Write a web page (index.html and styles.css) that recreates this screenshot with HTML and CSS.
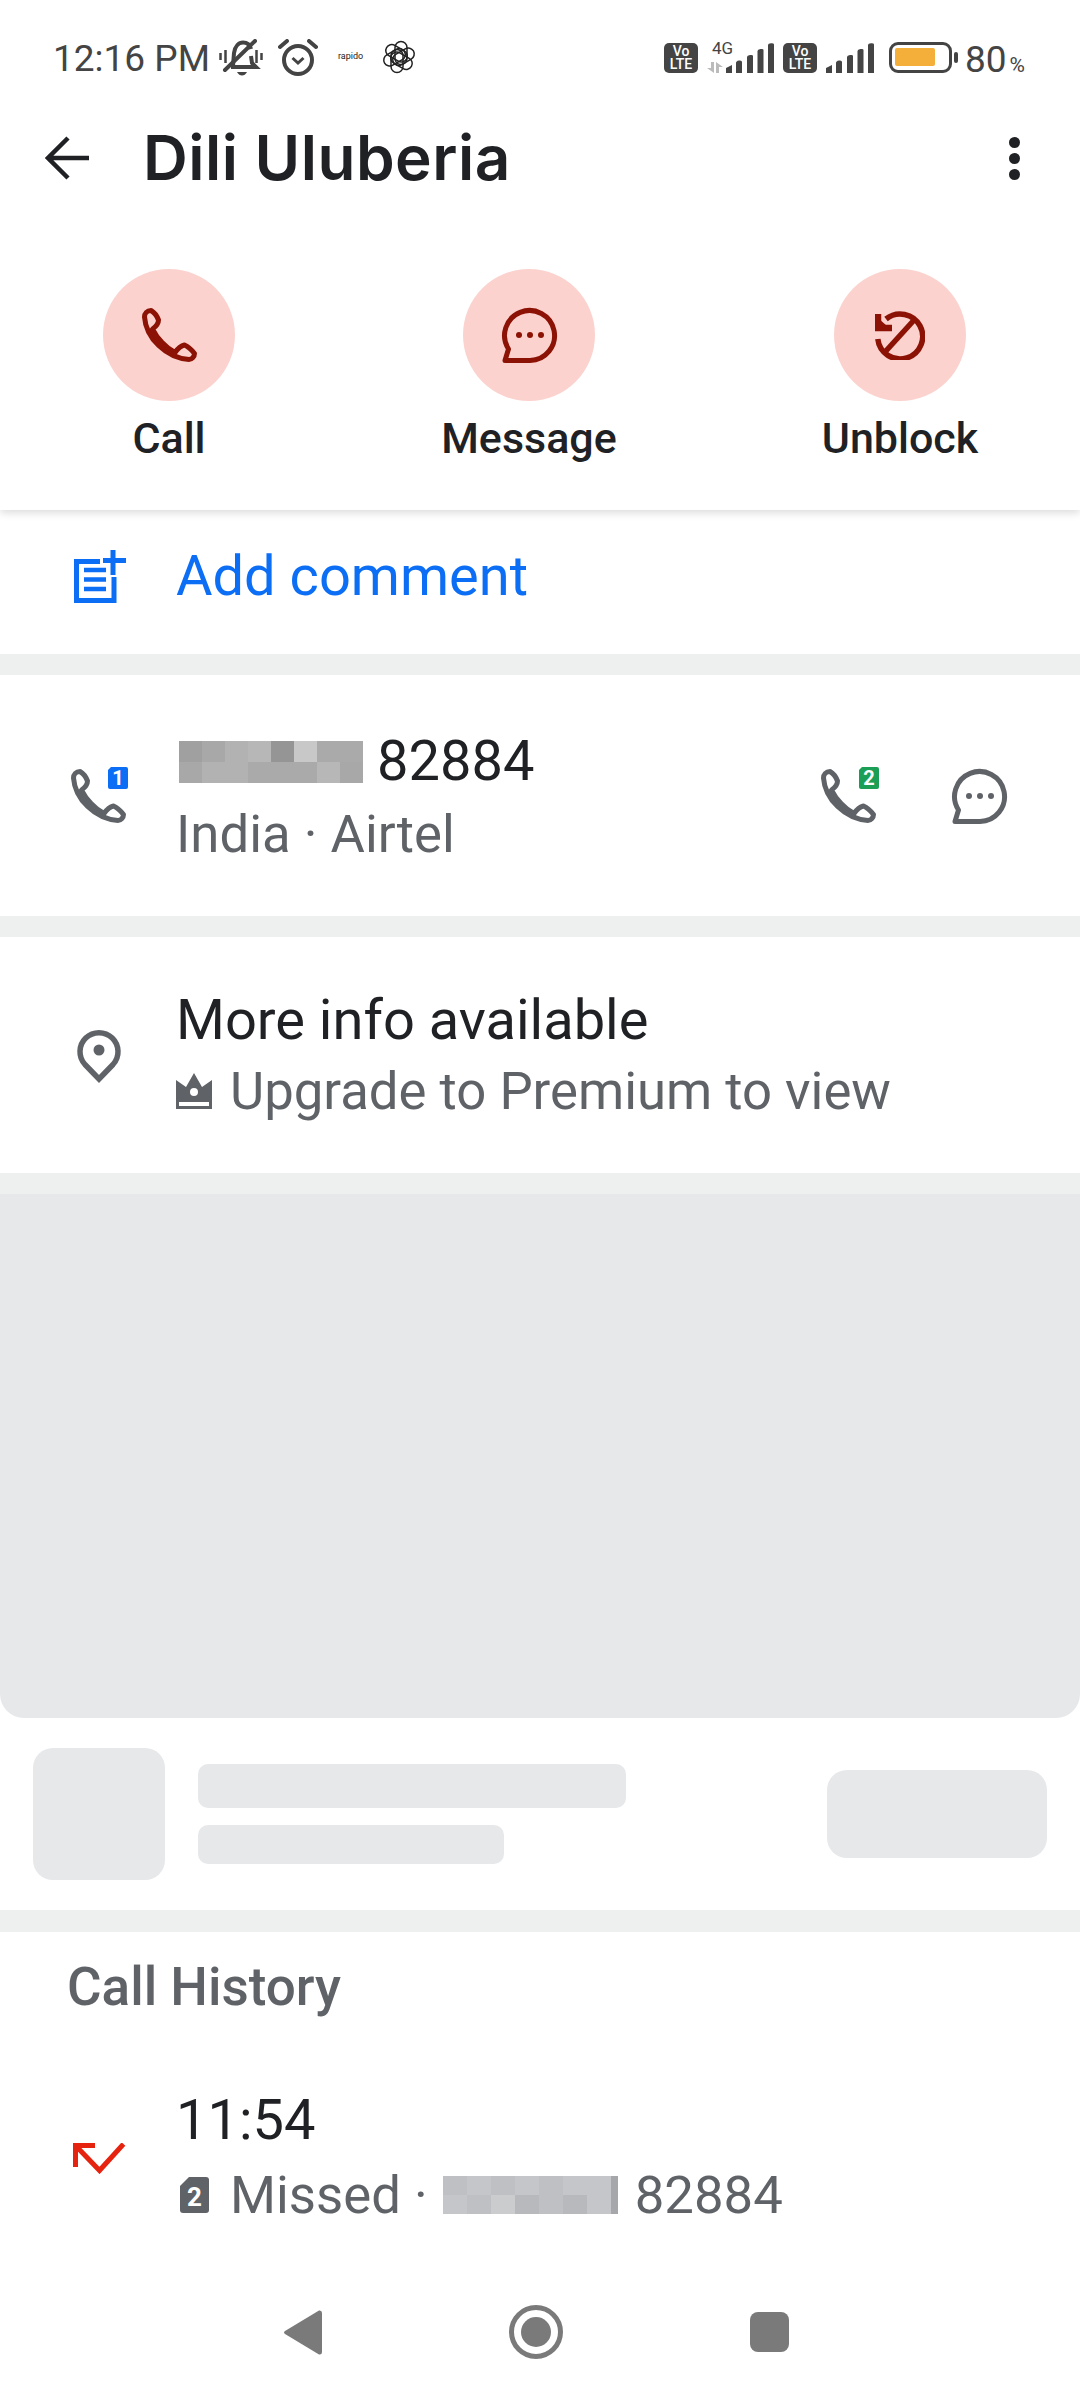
FILE: index.html
```html
<!DOCTYPE html>
<html lang="en">
<head>
  <meta charset="UTF-8" />
  <meta name="viewport" content="width=device-width, initial-scale=1.0"/>
  <title>Dili Uluberia</title>
  <link rel="stylesheet" href="styles.css">
</head>

<body>
  <!-- shared icons -->
  <svg class="sprite" width="0" height="0">
    <symbol id="phone" viewBox="0 0 55 54">
      <path d="M9 2.5C5 2.5 2.5 5.500 2.500 9C4 30 24 50 47 51.500C50 51.500 52.500 48.500 52.500 45.500C49 41 46 38.500 42.500 37C38 38 35.500 41 33 44.500C24 40 15 30 10.500 21C14 18.500 16.500 15 16.500 12C15 8 12.500 4.500 9 2.500Z" fill="none" stroke="currentColor" stroke-width="5" stroke-linejoin="round"/>
    </symbol>
    <symbol id="bubble" viewBox="0 0 57 56">
      <path d="M4 53.500L7.500 42A25 25 0 1 1 29 53.500Z" fill="none" stroke="currentColor" stroke-width="5" stroke-linejoin="round"/>
      <circle cx="18" cy="28" r="3" fill="currentColor"/>
      <circle cx="29" cy="28" r="3" fill="currentColor"/>
      <circle cx="40" cy="28" r="3" fill="currentColor"/>
    </symbol>
    <symbol id="bars" viewBox="0 0 48 30">
      <path d="M0 30V25L6 22V30ZM10 30V20Q10 18 13 17.500Q16 17 16 19V30ZM21 30V14Q21 12.500 24 12Q27 11.500 27 13V30ZM31.500 30V8Q31.500 6.500 34.500 6Q37.500 5.500 37.500 7V30ZM42 30V2Q42 .5 45 .2Q48 0 48 1.500V30Z" fill="currentColor"/>
    </symbol>
  </svg>

  <div class="page">
    <header class="top">
      <div class="status-bar">
        <span class="clock">12:16 PM</span>
        <svg class="st-bell" width="44" height="37" viewBox="0 0 44 37" fill="none" stroke="#444" stroke-width="4">
          <path d="M14 27L15 14C16 7 20 3.500 24 3.500C28 3.500 31 6 32 10M32 17L33 24L37 28H12"/>
          <path d="M6 31L36 2" stroke-linecap="round"/>
          <path d="M1.500 14V21M6.500 11V24M37.500 11V24M42.500 14V21" stroke-width="2.500"/>
          <path d="M18 33H28Q26 36.500 23 36.500Q20 36.500 18 33Z" fill="#444" stroke="none"/>
        </svg>
        <svg class="st-alarm" width="40" height="37" viewBox="0 0 40 37" fill="none" stroke="#444" stroke-width="4">
          <circle cx="20" cy="21" r="14"/>
          <path d="M2 8L9 2M38 8L31 2" stroke-linecap="round"/>
          <path d="M14.500 19L20 24L25.500 19" stroke-width="3"/>
        </svg>
        <span class="st-rapido">rapido</span>
        <svg class="st-knot" width="34" height="34" viewBox="0 0 34 34" fill="none" stroke="#222" stroke-width="1.500">
          <rect x="13" y="1.500" width="12" height="23" rx="6"/>
          <rect x="13" y="1.500" width="12" height="23" rx="6" transform="rotate(60 17 17)"/>
          <rect x="13" y="1.500" width="12" height="23" rx="6" transform="rotate(120 17 17)"/>
          <rect x="13" y="1.500" width="12" height="23" rx="6" transform="rotate(180 17 17)"/>
          <rect x="13" y="1.500" width="12" height="23" rx="6" transform="rotate(240 17 17)"/>
          <rect x="13" y="1.500" width="12" height="23" rx="6" transform="rotate(300 17 17)"/>
        </svg>

        <div class="status-right">
          <div class="volte"><span>Vo</span><span>LTE</span></div>
          <div class="net">
            <span class="net-label">4G</span>
            <svg width="16" height="11" viewBox="0 0 16 11" fill="#bbb">
              <path d="M4 0H7V11L0 6H4ZM9 0L16 5H12V11H9Z"/>
            </svg>
          </div>
          <svg class="signal" width="48" height="30"><use href="#bars"/></svg>
          <div class="volte volte-two"><span>Vo</span><span>LTE</span></div>
          <svg class="signal signal-two" width="48" height="30"><use href="#bars"/></svg>
          <div class="battery"><div class="battery-fill"></div></div>
          <div class="battery-nub"></div>
          <span class="batt-num">80</span><span class="batt-pct">%</span>
        </div>
      </div>

      <div class="app-bar">
        <svg class="back" width="44" height="44" viewBox="0 0 44 44" fill="none" stroke="#202124" stroke-width="4.500">
          <path d="M44 22H3M23 2L3 22L23 42"/>
        </svg>
        <h1 class="title">Dili Uluberia</h1>
        <div class="more"><i></i><i></i><i></i></div>
      </div>

      <div class="actions">
        <div class="action">
          <div class="action-circle">
            <svg width="55" height="54"><use href="#phone"/></svg>
          </div>
          <span>Call</span>
        </div>
        <div class="action">
          <div class="action-circle">
            <svg width="57" height="56"><use href="#bubble"/></svg>
          </div>
          <span>Message</span>
        </div>
        <div class="action">
          <div class="action-circle">
            <svg width="50" height="50" viewBox="0 0 50 50" fill="none" stroke="currentColor" stroke-width="5.500">
              <path d="M2.800 29A22.500 22.500 0 1 0 11 9"/>
              <path d="M3 4V18H17" stroke-width="6.500"/>
              <path d="M3 8L12 16H3Z" fill="currentColor" stroke="none"/>
              <path d="M40 9L10 42"/>
            </svg>
          </div>
          <span>Unblock</span>
        </div>
      </div>
    </header>

    <section class="row row-comment">
      <div class="row-icon">
        <svg width="53" height="53" viewBox="0 0 53 53" fill="none" stroke="#0b6ef5" stroke-width="5">
          <path d="M27 11.500H3.500V50.500H41V27"/>
          <path d="M40 0V25M30 10.500H53"/>
          <path d="M11 20H33M11 29.500H33M11 39H33" stroke-width="4.500"/>
        </svg>
      </div>
      <div class="comment-text">Add comment</div>
    </section>

    <div class="band"></div>

    <section class="row row-phone">
      <div class="row-icon">
        <svg class="phone-sim" width="57" height="57" viewBox="0 0 57 57">
          <use href="#phone" x="0" y="2" width="55" height="54"/>
          <path d="M40 0H55Q57 0 57 2V20Q57 22 55 22H39Q37 22 37 20V3Z" fill="#0b6ef5"/>
          <text x="47" y="18" class="sim-num">1</text>
        </svg>
      </div>
      <div class="row-text">
        <div class="line-main number-line">
          <div class="blur-num">
            <i class="g1"></i><i class="g2"></i><i class="g3"></i><i class="g4"></i><i class="g5"></i><i class="g6"></i><i class="g7"></i><i class="g7"></i>
            <i class="g2"></i><i class="g3"></i><i class="g3"></i><i class="g7"></i><i class="g7"></i><i class="g7"></i><i class="g4"></i><i class="g2"></i>
          </div>
          <span>82884</span>
        </div>
        <div class="line-sub">India · Airtel</div>
      </div>
      <div class="row-end">
        <svg class="phone-sim" width="58" height="57" viewBox="0 0 58 57">
          <use href="#phone" x="0" y="2" width="55" height="54"/>
          <path d="M41 0H56Q58 0 58 2V20Q58 22 56 22H40Q38 22 38 20V3Z" fill="#1b9e55"/>
          <text x="48" y="18" class="sim-num">2</text>
        </svg>
        <svg class="bubble-gray" width="57" height="56"><use href="#bubble"/></svg>
      </div>
    </section>

    <div class="band"></div>

    <section class="row row-info">
      <div class="row-icon">
        <svg width="44" height="55" viewBox="0 0 44 55" fill="none" stroke="#5f6368" stroke-width="5.500">
          <path d="M22 51L8 36.500A19 19 0 1 1 36 36.500Z" stroke-linejoin="miter"/>
          <circle cx="22" cy="22" r="5.500" fill="#5f6368" stroke="none"/>
        </svg>
      </div>
      <div class="row-text">
        <div class="line-main">More info available</div>
        <div class="line-sub upgrade">
          <svg width="36" height="36" viewBox="0 0 36 36">
            <path fill-rule="evenodd" fill="#5f6368" d="M18 0L26 14L36 7V36H0V7L10 14ZM18 15A4 4 0 1 0 18 23A4 4 0 1 0 18 15ZM3 29V33H33V29Z"/>
          </svg>
          <span>Upgrade to Premium to view</span>
        </div>
      </div>
    </section>

    <div class="band"></div>

    <div class="ad-media"></div>
    <section class="ad-row">
      <div class="ad-thumb"></div>
      <div class="ad-lines">
        <div class="ad-line-a"></div>
        <div class="ad-line-b"></div>
      </div>
      <div class="ad-btn"></div>
    </section>

    <div class="band band-last"></div>

    <section class="history">
      <h2 class="history-title">Call History</h2>
      <div class="row row-call">
        <div class="row-icon">
          <svg width="53" height="31" viewBox="0 0 53 31" fill="none" stroke="#e6230f" stroke-width="5">
            <path d="M2.500 24V2.500H22M2.500 2.500L26.500 27.500L50.500 1"/>
          </svg>
        </div>
        <div class="row-text">
          <div class="line-main">11:54</div>
          <div class="line-sub missed">
            <svg width="29" height="36" viewBox="0 0 29 36">
              <path d="M9 0H26Q29 0 29 3V33Q29 36 26 36H3Q0 36 0 33V9Z" fill="#5f6368"/>
              <text x="14.500" y="29" class="sim-num-big">2</text>
            </svg>
            <span class="missed-label">Missed ·</span>
            <div class="blur-num blur-light">
              <i class="l2"></i><i class="l1"></i><i class="l2"></i><i class="l1"></i><i class="l2"></i><i class="l1"></i><i class="l1"></i><i class="l3"></i>
              <i class="l1"></i><i class="l2"></i><i class="l4"></i><i class="l5"></i><i class="l2"></i><i class="l5"></i><i class="l1"></i><i class="l3"></i>
            </div>
            <span class="missed-num">82884</span>
          </div>
        </div>
      </div>
    </section>

    <nav class="nav-bar">
      <svg width="38" height="45" viewBox="0 0 38 45"><path d="M35 .5Q38 0 38 3V42Q38 45 35 44.500L1 24Q-1 22.500 1 21Z" fill="#7a7a7a"/></svg>
      <svg width="54" height="54" viewBox="0 0 54 54"><circle cx="27" cy="27" r="24.500" fill="none" stroke="#7a7a7a" stroke-width="5"/><circle cx="27" cy="27" r="15" fill="#7a7a7a"/></svg>
      <div class="nav-square"></div>
    </nav>
  </div>
</body>
</html>
```

FILE: styles.css
```css
* {
  box-sizing: border-box;
}

body {
  margin: 0;
  font-family: Roboto, 'Noto Sans', sans-serif;
  background: #fff;
  color: #202124;
}

.sprite {
  position: absolute;
}

.page {
  width: 1080px;
  height: 2400px;
  display: flex;
  flex-direction: column;
  overflow: hidden;
}

/* header */
.top {
  height: 510px;
  flex: none;
  background: #fff;
  box-shadow: 0 3px 8px rgba(0,0,0,0.14);
  position: relative;
}

.status-bar {
  height: 96px;
  display: flex;
  align-items: flex-start;
  padding: 39px 0 0 53px;
  color: #444;
}

.clock {
  font-size: 37px;
  line-height: 40px;
  margin-top: 0;
  width: 166px;
}

.st-alarm {
  margin-left: 15px;
}

.st-rapido {
  font-size: 9px;
  line-height: 12px;
  margin: 11px 0 0 20px;
  width: 23px;
  color: #222;
}

.st-knot {
  margin: 1px 0 0 21px;
}

.status-right {
  position: absolute;
  top: 42px;
  left: 664px;
  display: flex;
  align-items: flex-start;
}

.volte {
  width: 34px;
  height: 30px;
  margin-top: 1px;
  background: #444;
  border-radius: 5px;
  color: #fff;
  display: flex;
  flex-direction: column;
  align-items: center;
  justify-content: center;
  font-size: 14px;
  line-height: 13px;
  font-weight: 500;
}

.net {
  width: 29px;
  margin-left: 9px;
  display: flex;
  flex-direction: column;
  color: #444;
}

.net-label {
  font-size: 17px;
  line-height: 18px;
  margin: -3px 0 0 5px;
}

.net svg {
  margin-top: 5px;
}

.signal {
  color: #444;
  margin-left: -10px;
  margin-top: 1px;
}

.volte-two {
  margin-left: 9px;
}

.signal-two {
  margin-left: 9px;
}

.battery {
  width: 63px;
  height: 31px;
  margin-left: 15px;
  border: 3.500px solid #444;
  border-radius: 9px;
  padding: 3px;
}

.battery-fill {
  width: 40px;
  height: 18px;
  background: #f4ae3a;
  border-radius: 2px;
}

.battery-nub {
  width: 4px;
  height: 11px;
  margin: 10px 0 0 2px;
  background: #444;
  border-radius: 2px;
}

.batt-num {
  font-size: 37px;
  line-height: 36px;
  margin-left: 7px;
  color: #444;
}

.batt-pct {
  font-size: 21px;
  line-height: 20px;
  margin: 13px 0 0 3px;
  color: #444;
}

.app-bar {
  height: 124px;
  display: flex;
  align-items: center;
  padding: 0 60px 0 45px;
}

.back {
  flex: none;
}

.title {
  margin: 0 0 0 54px;
  font-family: Inter, sans-serif;
  font-size: 62px;
  font-weight: 600;
  line-height: 70px;
  letter-spacing: 0.5px;
}

.more {
  margin-left: auto;
  display: flex;
  flex-direction: column;
  gap: 5px;
}

.more i {
  display: block;
  width: 11px;
  height: 11px;
  background: #202124;
  border-radius: 50%;
}

.actions {
  display: grid;
  grid-template-columns: 338px 382px 360px;
  padding-top: 49px;
}

.action {
  display: flex;
  flex-direction: column;
  align-items: center;
  font-size: 43px;
  font-weight: 500;
  line-height: 50px;
}

.action span {
  margin-top: 12px;
}

.action-circle {
  width: 132px;
  height: 132px;
  border-radius: 50%;
  background: #fbd2ce;
  color: #8b1204;
  display: flex;
  align-items: center;
  justify-content: center;
}

/* rows */
.row {
  display: flex;
  align-items: center;
  padding-left: 40px;
  flex: none;
}

.row-icon {
  width: 118px;
  flex: none;
  margin-right: 18px;
  display: flex;
  justify-content: center;
}

.band {
  height: 21px;
  flex: none;
  background: #eef0f0;
}

.band-last {
  height: 22px;
}

.row-comment {
  height: 144px;
  padding-bottom: 12px;
}

.comment-text {
  font-size: 56px;
  line-height: 66px;
  color: #0b6ef5;
}

.row-phone {
  height: 241px;
  padding-right: 72px;
}

.row-text {
  display: flex;
  flex-direction: column;
}

.line-main {
  font-size: 56px;
  line-height: 73px;
}

.line-sub {
  font-size: 52.7px;
  line-height: 73px;
  color: #5f6368;
}

.row-phone .row-text {
  padding-top: 5px;
}

.number-line {
  display: flex;
  align-items: center;
  gap: 14px;
}

.number-line .blur-num {
  margin-left: 3px;
}

.blur-num {
  display: grid;
  grid-template-columns: repeat(8, 23px);
  grid-auto-rows: 21px;
}

.g1 { background: #a0a0a0; }
.g2 { background: #a8a8a8; }
.g3 { background: #b2b2b2; }
.g4 { background: #b7b7b7; }
.g5 { background: #959595; }
.g6 { background: #c8c8c8; }
.g7 { background: #aaaaaa; }

.row-end {
  margin-left: auto;
  display: flex;
  align-items: center;
  gap: 72px;
}

.phone-sim,
.bubble-gray {
  color: #5f6368;
}

.sim-num {
  font-size: 20px;
  font-weight: 700;
  fill: #fff;
  text-anchor: middle;
}

.sim-num-big {
  font-size: 26px;
  font-weight: 700;
  fill: #fff;
  text-anchor: middle;
}

.row-info {
  height: 236px;
}

.row-info .line-main {
  line-height: 69px;
}

.row-info .line-sub {
  line-height: 72px;
}

.row-info .row-text {
  padding-top: 3px;
}

.upgrade {
  display: flex;
  align-items: center;
  gap: 18px;
}

/* loading placeholder */
.ad-media {
  height: 524px;
  flex: none;
  background: #e7e8ea;
  border-radius: 0 0 24px 24px;
}

.ad-row {
  height: 192px;
  flex: none;
  display: flex;
  align-items: center;
  padding: 0 33px;
}

.ad-thumb {
  width: 132px;
  height: 132px;
  background: #e7e8ea;
  border-radius: 20px;
}

.ad-lines {
  margin-left: 33px;
  display: flex;
  flex-direction: column;
  gap: 17px;
}

.ad-line-a {
  width: 428px;
  height: 44px;
  background: #e7e8ea;
  border-radius: 10px;
}

.ad-line-b {
  width: 306px;
  height: 39px;
  background: #e7e8ea;
  border-radius: 10px;
}

.ad-btn {
  width: 220px;
  height: 88px;
  margin-left: auto;
  background: #e7e8ea;
  border-radius: 20px;
}

/* call history */
.history {
  flex: none;
}

.history-title {
  margin: 0;
  padding: 26px 0 0 67px;
  font-size: 53px;
  font-weight: 500;
  line-height: 58px;
  color: #5f6368;
}

.row-call {
  margin-top: 67px;
}

.row-call .line-main {
  line-height: 74px;
}

.row-call .line-sub {
  line-height: 76px;
}

.missed {
  display: flex;
  align-items: center;
  margin-left: 4px;
}

.missed-label {
  margin-left: 21px;
}

.missed .blur-num {
  grid-template-columns: repeat(7, 24px) 7px;
  grid-auto-rows: 19px;
  margin-left: 15px;
}

.missed-num {
  margin-left: 17px;
}

.l1 { background: #c5c6c9; }
.l2 { background: #bfc0c4; }
.l3 { background: #a5a7ab; }
.l4 { background: #cbccce; }
.l5 { background: #b8b9bc; }

/* bottom nav */
.nav-bar {
  margin-top: auto;
  height: 136px;
  flex: none;
  display: flex;
  align-items: center;
  gap: 187px;
  padding-left: 284px;
}

.nav-square {
  width: 39px;
  height: 40px;
  background: #7a7a7a;
  border-radius: 8px;
}
```
